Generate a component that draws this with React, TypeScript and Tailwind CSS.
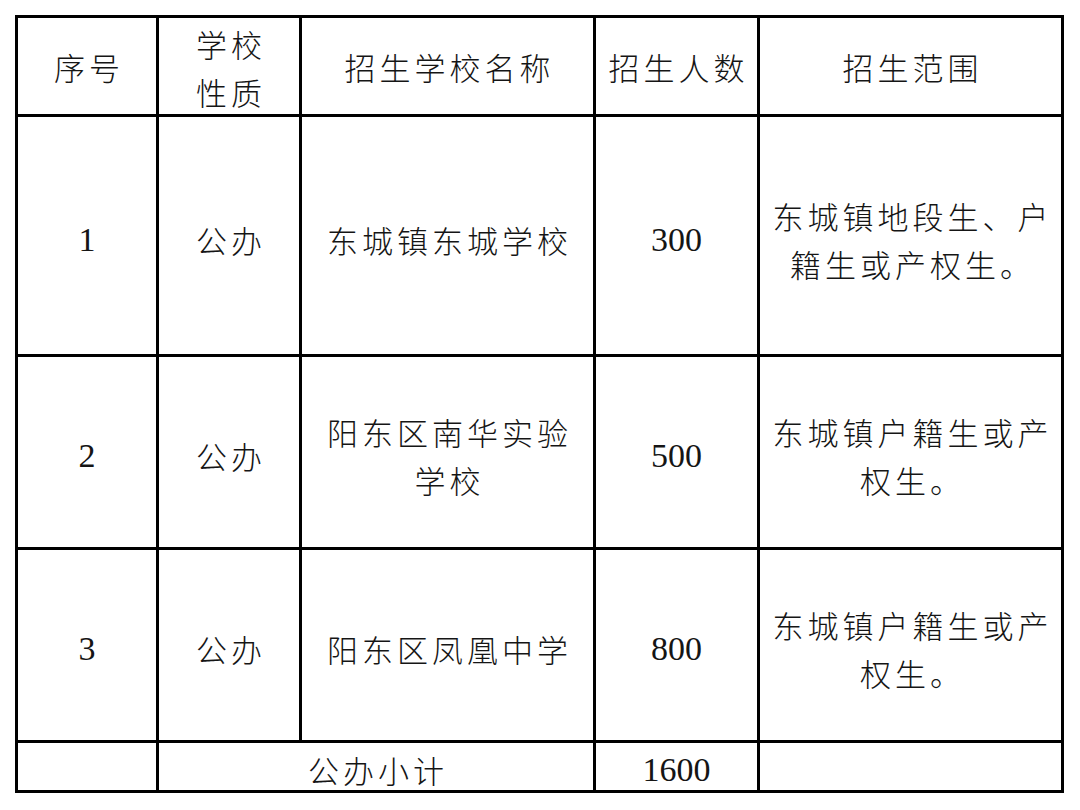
import React from "react";

const cjk = "font-['Noto_Sans_CJK_SC','Noto_Sans_CJK_JP',sans-serif] font-light";
const num = "font-['Liberation_Serif','Times_New_Roman',serif]";

function Cell({
  children,
  className = "",
  digits = false,
}: {
  children?: React.ReactNode;
  className?: string;
  digits?: boolean;
}) {
  return (
    <div
      className={`bg-white flex items-center justify-center text-center text-[#151515] ${
        digits
          ? `${num} text-[34px] leading-[48px]`
          : `${cjk} text-[31px] leading-[48px] tracking-[4px] pl-[4px]`
      } ${className}`}
    >
      <div>{children}</div>
    </div>
  );
}

export default function App() {
  return (
    <div className="w-[1080px] h-[810px] bg-white pt-[15px] pl-[15px]">
      <div className="w-[1049px] bg-black p-[3px] grid grid-cols-[138px_140px_291px_161px_301px] grid-rows-[96px_237px_190px_190px_47px] gap-[3px]">
        {/* header */}
        <Cell className="pt-[2px]">序号</Cell>
        <Cell className="pt-[4px]">
          学校
          <br />
          性质
        </Cell>
        <Cell className="pt-[2px]">招生学校名称</Cell>
        <Cell className="pt-[2px]">招生人数</Cell>
        <Cell className="pt-[2px]">招生范围</Cell>

        {/* row 1 */}
        <Cell digits className="pt-[8px]">1</Cell>
        <Cell className="pt-[8px]">公办</Cell>
        <Cell className="pt-[8px]">东城镇东城学校</Cell>
        <Cell digits className="pt-[8px]">300</Cell>
        <Cell className="pt-[8px]">
          东城镇地段生、户
          <br />
          籍生或产权生。
        </Cell>

        {/* row 2 */}
        <Cell digits className="pt-[8px]">2</Cell>
        <Cell className="pt-[8px]">公办</Cell>
        <Cell className="pt-[8px]">
          阳东区南华实验
          <br />
          学校
        </Cell>
        <Cell digits className="pt-[8px]">500</Cell>
        <Cell className="pt-[8px]">
          东城镇户籍生或产
          <br />
          权生。
        </Cell>

        {/* row 3 */}
        <Cell digits className="pt-[8px]">3</Cell>
        <Cell className="pt-[8px]">公办</Cell>
        <Cell className="pt-[8px]">阳东区凤凰中学</Cell>
        <Cell digits className="pt-[8px]">800</Cell>
        <Cell className="pt-[8px]">
          东城镇户籍生或产
          <br />
          权生。
        </Cell>

        {/* subtotal */}
        <Cell />
        <Cell className="col-span-2 pt-[6px]">公办小计</Cell>
        <Cell digits className="pt-[6px]">1600</Cell>
        <Cell />
      </div>
    </div>
  );
}
